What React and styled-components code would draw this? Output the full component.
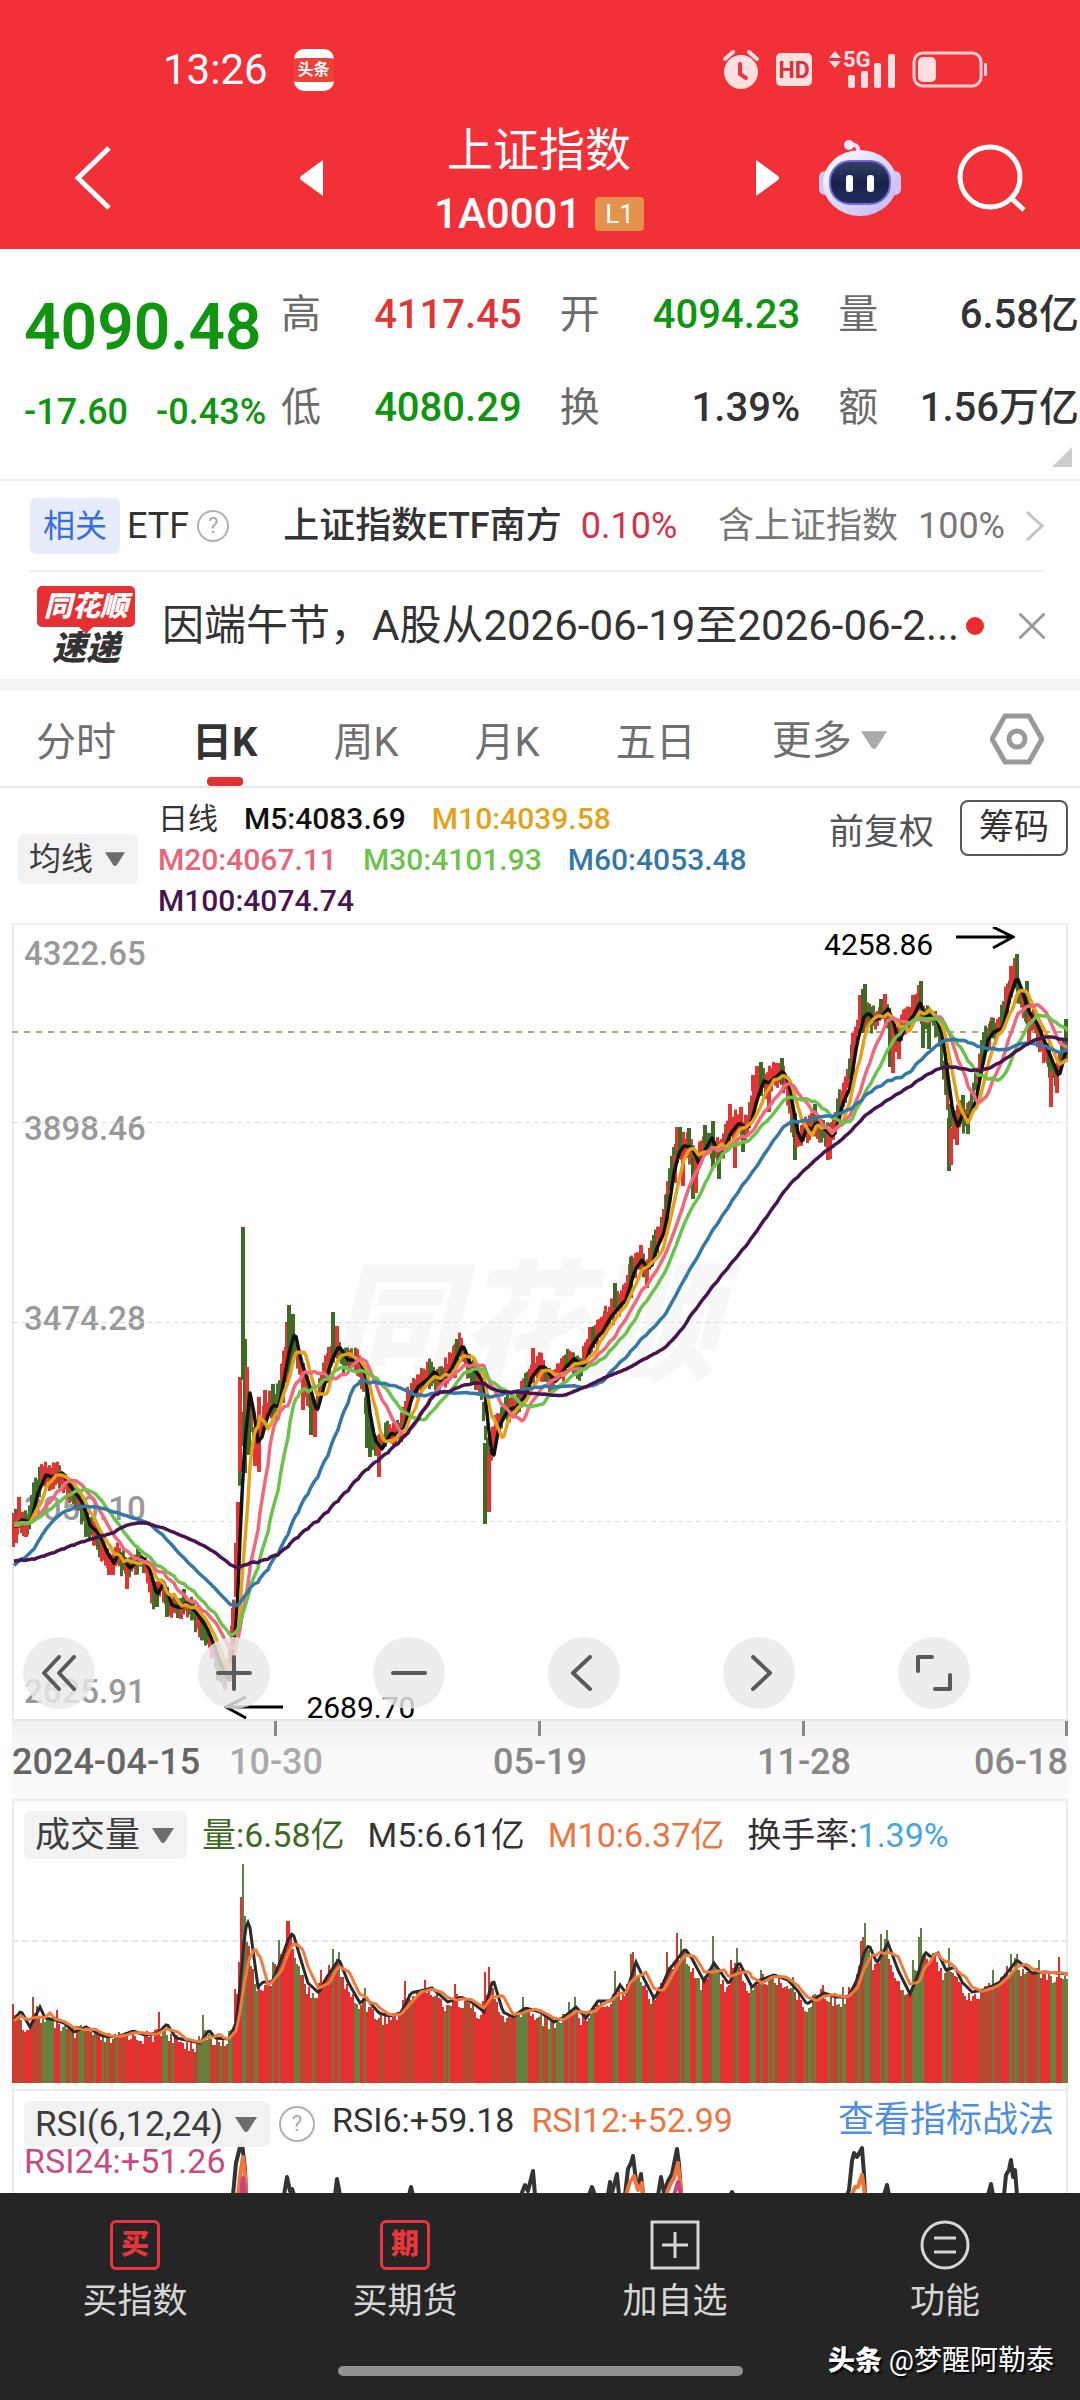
import React, { useState } from "react";
import styled, { createGlobalStyle } from "styled-components";

const GlobalStyle = createGlobalStyle`
  * {
    box-sizing: border-box;
  }
  body {
    margin: 0;
    background: #fff;
    color: #333;
    font-family: Roboto, "Noto Sans CJK SC", sans-serif;
  }
  button, select, a {
    font-family: inherit;
    color: inherit;
  }
`;

/* ---------- series ---------- */

const STEP = 2; // one trading day on the x axis

// 5 day average, [x, y]; negative x is the history before the first visible day
const priceM5 = [
  [-210, 600], [-160, 620], [-130, 650], [-100, 690], [-88, 760], [-75, 680], [-60, 615], [-40, 600], [-20, 598],
  [3, 604], [10, 597], [19, 599], [26, 570], [34, 552], [40, 554], [50, 550], [59, 564], [71, 580], [78, 602],
  [88, 612], [95, 629], [102, 640], [107, 630], [118, 645], [131, 634], [138, 647], [145, 672], [152, 660],
  [160, 682], [169, 685], [174, 680], [184, 689], [195, 705], [203, 724], [212, 750], [218, 757], [223, 717],
  [226, 667], [229, 590], [233, 517], [238, 470], [242, 490], [246, 519], [250, 514], [255, 495], [261, 482],
  [267, 484], [277, 430], [283, 409], [289, 437], [298, 464], [305, 489], [313, 460], [320, 437], [327, 423],
  [336, 437], [348, 437], [354, 454], [358, 490], [363, 517], [370, 526], [379, 510], [384, 512], [393, 504],
  [399, 477], [406, 464], [415, 457], [423, 448], [429, 459], [439, 447], [451, 422], [458, 440], [465, 450],
  [472, 460], [477, 510], [481, 537], [487, 504], [496, 487], [505, 484], [515, 470], [520, 454], [528, 444],
  [533, 444], [543, 459], [554, 444], [562, 436], [573, 444], [578, 426], [587, 412], [590, 410], [599, 394],
  [609, 382], [614, 377], [623, 347], [630, 337], [635, 345], [640, 342], [645, 325], [652, 310], [657, 284],
  [662, 250], [667, 230], [672, 223], [679, 224], [683, 230], [687, 242], [693, 227], [700, 215], [705, 227],
  [712, 227], [719, 210], [727, 200], [735, 205], [740, 197], [745, 177], [752, 158], [757, 160], [764, 154],
  [771, 148], [777, 160], [781, 184], [786, 210], [790, 218], [795, 204], [800, 207], [805, 199], [812, 205],
  [821, 214], [826, 200], [831, 180], [838, 165], [845, 120], [852, 94], [857, 90], [862, 97], [869, 94],
  [876, 86], [881, 97], [887, 120], [893, 104], [902, 92], [908, 80], [913, 92], [924, 94], [931, 114],
  [936, 154], [941, 190], [946, 203], [951, 190], [957, 197], [964, 177], [969, 150], [976, 117], [982, 109],
  [991, 105], [998, 74], [1005, 54], [1010, 67], [1017, 89], [1025, 100], [1032, 117], [1038, 132], [1047, 154],
  [1055, 124],
];

// wide days: [x, high, low, r(ise) | g(reen, fall)]
const priceSpikes = [
  [1, 590, 624, "r"], [4, 600, 620, "r"], [7, 574, 600, "r"], [14, 596, 614, "r"], [45, 540, 560, "r"],
  [97, 630, 652, "r"], [101, 632, 652, "r"], [115, 640, 666, "r"], [145, 664, 684, "g"], [155, 664, 694, "g"],
  [169, 682, 696, "r"], [172, 666, 680, "g"], [213, 735, 766, "r"], [221, 685, 714, "r"], [224, 620, 674, "r"],
  [226, 579, 650, "r"], [228, 454, 549, "r"], [231, 304, 457, "g"], [233, 416, 550, "g"], [235, 444, 500, "r"],
  [237, 470, 532, "g"], [243, 507, 543, "r"], [247, 474, 549, "r"], [253, 467, 500, "r"], [261, 461, 480, "g"],
  [271, 440, 480, "r"], [275, 399, 460, "r"], [277, 382, 450, "g"], [281, 391, 440, "g"], [291, 440, 487, "r"],
  [299, 470, 512, "g"], [303, 480, 514, "r"], [317, 424, 460, "r"], [321, 389, 440, "g"], [325, 403, 430, "r"],
  [355, 460, 525, "g"], [358, 490, 534, "g"], [367, 520, 554, "r"], [443, 422, 455, "r"], [445, 416, 440, "g"],
  [449, 415, 430, "r"], [473, 520, 601, "g"], [477, 533, 589, "r"], [481, 504, 534, "r"], [521, 425, 450, "r"],
  [578, 404, 430, "r"], [581, 404, 425, "g"], [593, 388, 405, "r"], [603, 360, 385, "g"], [619, 334, 375, "g"],
  [629, 322, 345, "r"], [635, 345, 365, "r"], [655, 271, 310, "g"], [663, 232, 260, "r"], [665, 204, 227, "r"],
  [668, 204, 230, "g"], [671, 225, 263, "r"], [677, 205, 225, "g"], [681, 235, 276, "g"], [684, 232, 270, "r"],
  [693, 202, 220, "g"], [701, 198, 244, "g"], [707, 225, 256, "g"], [718, 181, 210, "r"], [723, 200, 245, "r"],
  [729, 184, 205, "r"], [731, 205, 229, "g"], [741, 152, 168, "r"], [745, 143, 168, "r"], [749, 139, 168, "g"],
  [757, 150, 189, "r"], [764, 140, 160, "r"], [770, 135, 160, "g"], [783, 190, 237, "g"], [785, 200, 224, "r"],
  [803, 181, 205, "g"], [816, 205, 237, "r"], [818, 205, 236, "r"], [833, 159, 180, "r"], [841, 110, 150, "r"],
  [848, 72, 100, "r"], [851, 66, 110, "g"], [853, 61, 95, "g"], [869, 76, 95, "g"], [873, 71, 95, "r"],
  [878, 100, 144, "g"], [881, 100, 150, "r"], [887, 100, 136, "r"], [901, 72, 95, "r"], [907, 62, 90, "r"],
  [909, 58, 90, "g"], [911, 90, 125, "g"], [917, 95, 126, "g"], [935, 140, 172, "g"], [937, 195, 248, "g"],
  [939, 205, 242, "r"], [945, 200, 222, "r"], [951, 172, 195, "g"], [956, 195, 211, "g"], [979, 98, 115, "g"],
  [995, 65, 95, "r"], [999, 43, 70, "r"], [1003, 35, 60, "r"], [1005, 31, 65, "g"], [1015, 58, 100, "g"],
  [1017, 90, 119, "r"], [1037, 120, 144, "g"], [1039, 148, 184, "r"], [1045, 150, 170, "r"], [1054, 96, 125, "g"],
];

const volumeM5 = [
  [-20, 224], [2, 221], [9, 212], [18, 228], [28, 208], [33, 219], [43, 221], [52, 224], [62, 233], [74, 228],
  [91, 237], [105, 238], [121, 232], [133, 236], [146, 234], [155, 225], [164, 239], [174, 241], [188, 244],
  [197, 231], [203, 239], [217, 240], [224, 224], [229, 178], [233, 131], [237, 121], [240, 144], [246, 188],
  [251, 183], [260, 183], [269, 161], [276, 141], [281, 134], [288, 158], [296, 184], [307, 194], [313, 181],
  [327, 160], [336, 183], [348, 204], [354, 199], [367, 214], [377, 217], [389, 214], [399, 194], [420, 189],
  [436, 203], [449, 198], [461, 204], [472, 213], [481, 180], [491, 213], [501, 218], [513, 209], [528, 213],
  [542, 223], [552, 218], [564, 208], [574, 219], [586, 202], [599, 202], [608, 186], [614, 194], [624, 163],
  [631, 178], [642, 199], [648, 191], [657, 171], [673, 150], [679, 158], [692, 182], [702, 164], [717, 185],
  [727, 163], [740, 188], [748, 181], [762, 176], [776, 181], [785, 191], [795, 205], [812, 194], [824, 198],
  [836, 198], [845, 181], [852, 154], [857, 146], [865, 164], [876, 144], [886, 171], [898, 195], [905, 178],
  [913, 153], [919, 158], [926, 154], [934, 171], [943, 168], [950, 183], [960, 193], [972, 191], [988, 183],
  [1005, 161], [1020, 174], [1034, 173], [1055, 175],
];

const volumeSpikes = [
  [1, 205, "r"], [21, 198, "r"], [45, 211, "r"], [147, 213, "r"], [191, 216, "r"], [223, 190, "r"], [229, 98, "r"],
  [231, 65, "g"], [233, 117, "g"], [235, 143, "r"], [261, 163, "g"], [267, 141, "g"], [275, 122, "r"],
  [277, 122, "r"], [309, 171, "r"], [317, 166, "r"], [321, 150, "g"], [327, 153, "g"], [353, 189, "g"],
  [393, 182, "r"], [413, 181, "r"], [443, 185, "r"], [473, 173, "r"], [477, 168, "r"], [511, 198, "g"],
  [557, 203, "g"], [563, 198, "g"], [603, 172, "g"], [619, 155, "r"], [621, 153, "r"], [655, 153, "r"],
  [665, 134, "r"], [669, 140, "g"], [701, 137, "g"], [719, 161, "r"], [725, 149, "g"], [749, 171, "g"],
  [781, 178, "g"], [811, 186, "r"], [831, 188, "r"], [849, 142, "r"], [851, 138, "r"], [853, 124, "g"],
  [869, 135, "g"], [875, 131, "r"], [901, 161, "r"], [907, 138, "r"], [909, 129, "g"], [937, 149, "g"],
  [981, 171, "g"], [999, 155, "r"], [1005, 155, "g"], [1027, 161, "g"], [1047, 158, "r"],
];

const at = (series, x) => {
  const i = series.findIndex((p) => p[0] >= x);
  if (i < 0) return series[series.length - 1][1];
  if (i === 0) return series[0][1];
  const [x0, y0] = series[i - 1];
  const [x1, y1] = series[i];
  return y0 + ((y1 - y0) * (x - x0)) / (x1 - x0);
};

// an n day average is the mean of n / 5 five day averages, five days apart
const average = (series, days) => {
  const parts = days / 5;
  const points = [];
  for (let x = 2; x <= 1056; x += STEP) {
    let sum = 0;
    for (let k = 0; k < parts; k++) sum += at(series, x - k * 5 * STEP);
    points.push(`${x},${(sum / parts).toFixed(1)}`);
  }
  return points.join(" ");
};

const noise = (n) => {
  const v = Math.sin(n * 12.9898) * 43758.5453;
  return v - Math.floor(v);
};

const days = Array.from({ length: 528 }, (_, i) => i);

const candles = days.map((i) => {
  const x = i * STEP + 1;
  const mid = at(priceM5, x + 4);
  const rising = mid < at(priceM5, x);
  const top = mid - 5 - noise(i) * 10;
  const bottom = mid + 5 + noise(i + 700) * 11;
  const n = noise(Math.floor(i / 2) + 90) + (rising ? 0 : 0.2);
  let fill = "#e23434";
  if (n > 0.5) fill = "#b4492f";
  if (n > 0.75) fill = "#44702a";
  return { x, top, height: bottom - top, fill };
});

const volumeBars = days.map((i) => {
  const x = i * STEP + 1;
  const spike = volumeSpikes.find((s) => s[0] === x);
  const top = spike ? spike[1] : at(volumeM5, x + 3) - 4 + noise(i + 31) * 14;
  // the falling stretches of the first year carry more of the mixed tone
  const n = noise(Math.floor(i / 3) + 5) + noise(i) * 0.3;
  const early = x < 560 && (x < 215 || x > 330);
  let fill = "#e63030";
  if (n > (early ? 0.55 : 0.7)) fill = "#b8482f";
  if (n > (early ? 0.9 : 1)) fill = "#68803c";
  return { x, top, fill: spike && spike[2] === "g" ? "#5f8044" : fill };
});

const maLines = [
  { days: 5, color: "#111111" },
  { days: 10, color: "#e2a21c" },
  { days: 20, color: "#f0687c" },
  { days: 30, color: "#6cc24a" },
  { days: 60, color: "#3478a8" },
  { days: 100, color: "#481450" },
];

const rsiLines = [
  {
    color: "#333333",
    paths: [
      "221,106 224,74 228,58 230,54 233,80 234,106", "272,106 275,88 278,102 280,100 282,106",
      "323,106 325,90 328,106", "397,106 399,98 401,106", "509,106 513,96 516,102 521,82 523,106",
      "577,106 580,98 583,106", "596,106 598,93 600,104 605,85 607,106", "613,106 616,80 619,74 621,67 624,92 626,100 629,85 631,106",
      "646,106 649,88 652,104 656,92 660,85 665,60 667,75 669,106", "718,106 720,103 722,106",
      "835,106 837,101 840,72 842,64 845,68 850,59 852,85 853,106", "872,106 875,96 877,106",
      "976,106 979,95 981,106", "992,106 994,86 997,81 999,71 1001,88 1003,81 1005,106",
    ],
  },
  {
    color: "#f0743c",
    paths: [
      "226,106 229,80 231,68 233,84 234,106", "614,106 618,93 622,87 626,101 630,94 631,106",
      "654,106 658,96 662,89 666,74 668,92 669,106", "840,106 843,98 846,98 850,86 853,106",
    ],
  },
  { color: "#d03f82", paths: ["229,106 231,89 233,106", "662,106 666,93 669,106"] },
];

/* ---------- header ---------- */

const Header = styled.header`
  height: 249px;
  background: #f23037;
  color: #fff;
`;
const StatusBar = styled.div`
  display: flex;
  align-items: center;
  height: 106px;
  padding: 34px 92px 0 163px;
`;
const Clock = styled.span`
  font-size: 42px;
  line-height: 48px;
`;
const AppBadge = styled.span`
  width: 40px;
  height: 42px;
  margin-left: 26px;
  border-radius: 10px;
  border: solid #fff;
  border-width: 9px 0;
  background: #ee3f38;
  font-size: 16px;
  line-height: 24px;
  font-weight: 700;
  text-align: center;
`;
const StatusIcons = styled.div`
  display: flex;
  align-items: center;
  gap: 17px;
  margin-left: auto;
`;
const TitleBar = styled.div`
  display: grid;
  grid-template-columns: 1fr 480px 1fr;
  align-items: center;
  height: 143px;
`;
const TitleSide = styled.div`
  display: flex;
  align-items: center;
  justify-content: ${(p) => (p.$end ? "flex-end" : "flex-start")};
  gap: 55px;
  padding: 0 54px 0 74px;
  ${(p) => p.$end && "padding-left: 0;"}
`;
const TitleCenter = styled.div`
  display: flex;
  align-items: center;
  justify-content: space-between;
`;
const IconButton = styled.button`
  display: flex;
  padding: 0;
  border: none;
  background: none;
  cursor: pointer;
`;
const TitleText = styled.div`
  padding-top: 8px;
  text-align: center;
`;
const Title = styled.h1`
  margin: 0;
  font-size: 46px;
  line-height: 64px;
  font-weight: 400;
`;
const Code = styled.div`
  display: flex;
  align-items: center;
  justify-content: center;
  gap: 14px;
  font-size: 42px;
  line-height: 64px;
  font-weight: 500;
`;
const Level = styled.span`
  padding: 0 10px;
  border-radius: 4px;
  background: #e3934b;
  font-size: 26px;
  line-height: 34px;
  font-weight: 400;
`;

/* ---------- quote ---------- */

const colors = { up: "#e03535", down: "#0f950f", flat: "#333333" };

const Quote = styled.section`
  position: relative;
  display: flex;
  height: 232px;
  padding: 19px 1px 0 24px;
  border-bottom: 2px solid #eeeeee;
`;
const Last = styled.div`
  flex: 0 0 257px;
  padding-top: 18px;
  color: ${colors.down};
  white-space: nowrap;
`;
const LastPrice = styled.div`
  font-size: 64px;
  line-height: 84px;
  font-weight: 600;
`;
const LastChange = styled.div`
  display: flex;
  gap: 28px;
  font-size: 36px;
  line-height: 84px;
  font-weight: 500;
`;
const Stats = styled.dl`
  flex: 1;
  display: grid;
  grid-template-columns: repeat(3, 1fr);
  column-gap: 38px;
  align-content: start;
  margin: 0;
`;
const Stat = styled.div`
  display: flex;
  justify-content: space-between;
  height: 93px;
  font-size: 40px;
  line-height: 93px;
  white-space: nowrap;
  dt {
    color: #6b6b6b;
  }
  dd {
    margin: 0;
    color: ${(p) => colors[p.$tone]};
    font-weight: 500;
  }
`;
const Corner = styled.svg`
  position: absolute;
  right: 8px;
  bottom: 12px;
`;

/* ---------- etf + news ---------- */

const EtfRow = styled.section`
  display: flex;
  align-items: center;
  height: 91px;
  margin: 0 36px 0 30px;
  border-bottom: 2px solid #eeeeee;
  font-size: 36px;
  line-height: 56px;
  white-space: nowrap;
`;
const Tag = styled.span`
  padding: 0 13px;
  margin-right: 7px;
  border-radius: 6px;
  background: #e6ecfb;
  color: #3a6de0;
  font-size: 32px;
`;
const EtfHelp = styled.div`
  display: flex;
  margin: 0 54px 0 8px;
`;
const EtfFund = styled.div`
  display: flex;
  align-items: baseline;
  gap: 19px;
`;
const EtfName = styled.a`
  font-weight: 500;
  text-decoration: none;
`;
const EtfChange = styled.span`
  color: #d9304a;
`;
const EtfShare = styled.div`
  display: flex;
  align-items: baseline;
  gap: 20px;
  margin: 0 20px 0 auto;
  color: #777;
`;
const Help = styled.button`
  width: ${(p) => p.$size}px;
  height: ${(p) => p.$size}px;
  padding: 0;
  border: 2px solid #b0b0b0;
  border-radius: 50%;
  background: none;
  color: #aaa;
  font-size: 22px;
  line-height: 24px;
`;
const NewsRow = styled.section`
  display: flex;
  align-items: center;
  height: 119px;
  padding: 0 35px 0 37px;
  border-bottom: 12px solid #f4f4f4;
`;
const Express = styled.div`
  flex: none;
  width: 98px;
  margin-right: 27px;
  font-size: 34px;
  line-height: 36px;
  font-weight: 900;
  font-style: italic;
  text-align: center;
`;
const ExpressTop = styled.div`
  position: relative;
  margin-bottom: 3px;
  border-radius: 5px;
  background: #e53134;
  color: #fff;
  font-size: 28px;
  line-height: 41px;
  &::after {
    content: "";
    position: absolute;
    left: 42px;
    top: 41px;
    border: 7px solid transparent;
    border-top-color: #e53134;
  }
`;
const Headline = styled.a`
  flex: 1;
  overflow: hidden;
  font-size: 42px;
  line-height: 60px;
  text-decoration: none;
  white-space: nowrap;
`;
const UnreadDot = styled.span`
  width: 18px;
  height: 18px;
  margin: 0 35px 0 4px;
  border-radius: 50%;
  background: #e92c2c;
`;

/* ---------- tabs + legend ---------- */

const Tabs = styled.nav`
  display: flex;
  align-items: stretch;
  gap: 76px;
  height: 97px;
  padding: 0 36px;
  border-bottom: 2px solid #e8e8e8;
`;
const Tab = styled.button`
  position: relative;
  padding: 0;
  border: none;
  background: none;
  color: ${(p) => (p.$active ? "#333" : "#707070")};
  font-size: 40px;
  font-weight: ${(p) => (p.$active ? 700 : 400)};
  white-space: nowrap;
  &::after {
    content: "";
    position: absolute;
    left: calc(50% - 18px);
    bottom: 0;
    width: 36px;
    height: 9px;
    border-radius: 4px;
    background: ${(p) => (p.$active ? "#e03236" : "none")};
  }
`;
const MoreTab = styled.label`
  display: flex;
  align-items: center;
  gap: 9px;
  padding-top: 3px;
  color: #707070;
`;
const Settings = styled(IconButton)`
  align-items: center;
  margin-left: auto;
`;
const Picker = styled.label`
  display: inline-flex;
  align-items: center;
  gap: 11px;
  height: ${(p) => p.$height || 48}px;
  padding: 0 13px 0 11px;
  border-radius: 6px;
  background: #f2f2f2;
  opacity: 0.95;
`;
const Select = styled.select`
  appearance: none;
  padding: 0;
  border: none;
  outline: none;
  background: none;
  font-size: ${(p) => p.$size || 34}px;
`;
const Legend = styled.section`
  display: flex;
  align-items: flex-start;
  height: 135px;
  padding: 10px 12px 0 18px;
`;
const LegendPicker = styled.div`
  flex: none;
  width: 140px;
  padding-top: 36px;
`;
const LegendItems = styled.div`
  display: flex;
  flex-wrap: wrap;
  flex: 0 1 640px;
  column-gap: 26px;
  font-size: 30px;
  line-height: 41px;
  font-weight: 500;
`;
const LegendTitle = styled.span`
  font-weight: 400;
`;
const Colored = styled.span`
  color: ${(p) => p.$color};
`;
const Adjust = styled.button`
  margin-left: auto;
  padding: 0;
  border: none;
  background: none;
  color: #555;
  font-size: 35px;
  line-height: 70px;
`;
const Chips = styled.button`
  width: 108px;
  height: 56px;
  margin: 2px 0 0 26px;
  padding: 0;
  border: 2px solid #555;
  border-radius: 8px;
  background: #fff;
  font-size: 35px;
  line-height: 50px;
`;

/* ---------- charts ---------- */

const Panel = styled.section`
  position: relative;
  height: ${(p) => p.$height}px;
  margin: 0 12px;
  border: solid #ececec;
  border-width: 2px 2px 0;
`;
const Plot = styled.svg`
  position: absolute;
  left: -2px;
  top: -2px;
  width: calc(100% + 4px);
  height: ${(p) => p.$height}px;
`;
const Watermark = styled.div`
  position: absolute;
  left: 314px;
  top: 326px;
  color: #f7f7f7;
  font-size: 130px;
  line-height: 150px;
  font-weight: 900;
  font-style: italic;
`;
const AxisPrice = styled.span`
  position: absolute;
  left: 10px;
  top: ${(p) => p.$top}px;
  color: #999;
  font-size: 33px;
  line-height: 40px;
  font-weight: 500;
`;
const Marker = styled.div`
  position: absolute;
  left: ${(p) => p.$left}%;
  top: ${(p) => p.$top}px;
  display: flex;
  align-items: ${(p) => p.$align};
  gap: 22px;
  color: #000;
  font-size: 30px;
  line-height: 36px;
`;
const Controls = styled.div`
  position: absolute;
  left: 9px;
  right: 96px;
  bottom: 10px;
  display: flex;
  justify-content: space-between;
`;
const RoundButton = styled.button`
  display: flex;
  align-items: center;
  justify-content: center;
  width: 72px;
  height: 72px;
  padding: 0;
  border: none;
  border-radius: 50%;
  background: rgba(233, 233, 233, 0.82);
`;
const TimeAxis = styled.div`
  display: grid;
  grid-template-columns: minmax(0, 1fr) repeat(3, minmax(0, 2fr)) minmax(0, 1fr);
  height: 80px;
  margin: 0 12px;
  padding-top: 22px;
  border-top: 2px solid #e6e6e6;
  background: linear-gradient(#f1f1f1, #fafafa 50%);
  color: #888;
  font-size: 36px;
  line-height: 38px;
  font-weight: 500;
  text-align: center;
  white-space: nowrap;
`;
const Tick = styled.span`
  position: relative;
  justify-self: ${(p) => (p.$last ? "end" : "center")};
  color: ${(p) => (p.$fade ? "#aaa" : "inherit")};
  &::before {
    content: "";
    position: absolute;
    left: ${(p) => (p.$last ? "calc(100% - 3px)" : "calc(50% - 2px)")};
    top: -22px;
    width: 3px;
    height: 15px;
    background: #888;
  }
`;
const FirstDay = styled.span`
  color: #666;
  text-align: left;
`;
const PanelHead = styled.div`
  position: relative;
  display: flex;
  align-items: center;
  gap: 23px;
  padding: 10px 12px 0 10px;
  font-size: 34px;
  line-height: 48px;
  white-space: nowrap;
  ${Picker} {
    margin-right: -8px;
  }
`;
const RsiHead = styled(PanelHead)`
  align-items: flex-start;
  gap: 17px;
  line-height: 38px;
  ${Help} {
    margin-top: 5px;
  }
`;
const RsiClip = styled.div`
  height: 104px;
  overflow: hidden;
`;
const RsiSecond = styled.div`
  position: relative;
  padding-left: 10px;
  color: #c94a83;
  font-size: 34px;
  line-height: 28px;
`;
const TextLink = styled.a`
  margin-left: auto;
  color: #4f8fe0;
  font-size: 36px;
  text-decoration: none;
`;

/* ---------- footer ---------- */

const Footer = styled.footer`
  position: relative;
  height: 207px;
  background: #252525;
`;
const Actions = styled.nav`
  display: grid;
  grid-template-columns: repeat(4, 1fr);
  padding-top: 27px;
`;
const Action = styled.a`
  display: flex;
  flex-direction: column;
  align-items: center;
  gap: 7px;
  color: #d6d6d6;
  font-size: 35px;
  line-height: 50px;
  text-decoration: none;
`;
const ActionBox = styled.span`
  width: 50px;
  height: 50px;
  border: 3px solid #e8363c;
  border-radius: 6px;
  color: #e8363c;
  font-size: 28px;
  line-height: 43px;
  font-weight: 900;
  text-align: center;
`;
const HomeBar = styled.div`
  width: 405px;
  height: 10px;
  margin: 39px auto 0;
  border-radius: 5px;
  background: #929292;
`;
const Author = styled.div`
  position: absolute;
  right: 26px;
  bottom: 21px;
  color: #fff;
  font-size: 28px;
  line-height: 36px;
  text-shadow: 2px 2px 2px #000;
  b {
    font-weight: 900;
    font-size: 27px;
  }
`;

/* ---------- icons ---------- */

const Caret = ({ width = 22, color = "#666" }) => (
  <svg width={width} height={Math.round(width * 0.7)} viewBox="0 0 22 15" aria-hidden="true">
    <path d="M0 0h22L13 14q-2 2-4 0Z" fill={color} />
  </svg>
);

const Stroke = ({ d, size = 36, width = 4, color = "#5a5a5a" }) => (
  <svg width={size} height={size} viewBox="0 0 36 36" fill="none" stroke={color} strokeWidth={width} strokeLinecap="round" strokeLinejoin="round" aria-hidden="true">
    <path d={d} />
  </svg>
);

const PhoneStatus = () => (
  <StatusIcons>
    <svg width="36" height="40" viewBox="0 0 36 40" fill="#ffdfe0">
      <circle cx="18" cy="22" r="17" />
      <path d="M2 9l8-7M34 9l-8-7" stroke="#ffdfe0" strokeWidth="4" strokeLinecap="round" />
      <path d="M17 14v10l6 4" fill="none" stroke="#e8363b" strokeWidth="4" strokeLinecap="round" />
    </svg>
    <svg width="36" height="34" viewBox="0 0 36 34">
      <rect width="36" height="33" rx="5" fill="#ffdfe0" />
      <text x="18" y="25" textAnchor="middle" fontSize="23" fontWeight="700" fill="#d93238">HD</text>
    </svg>
    <svg width="66" height="52" viewBox="0 -6 66 52" fill="#ffdfe0">
      <path d="M0 8l6-7 6 7zM0 11h12l-6 7z" />
      <text x="14" y="17" fontSize="22" fontWeight="700">5G</text>
      <rect x="19" y="25" width="7" height="13" rx="2" />
      <rect x="32" y="21" width="7" height="17" rx="2" />
      <rect x="45" y="13" width="7" height="25" rx="2" />
      <rect x="59" y="4" width="7" height="34" rx="2" />
    </svg>
    <svg width="76" height="38" viewBox="0 0 76 38">
      <rect x="2" y="2" width="67" height="33" rx="9" fill="none" stroke="#ffcfd1" strokeWidth="3" />
      <rect x="6" y="6" width="18" height="25" rx="5" fill="#ffdfe0" />
      <rect x="72" y="12" width="3" height="13" rx="1" fill="#ffcfd1" />
    </svg>
  </StatusIcons>
);

const Robot = () => (
  <svg width="82" height="78" viewBox="0 0 82 78">
    <defs>
      <linearGradient id="shell" x1="0" y1="0" x2="1" y2="1">
        <stop offset="0" stopColor="#ffffff" />
        <stop offset="1" stopColor="#bfb4f0" />
      </linearGradient>
      <linearGradient id="visor" x1="0" y1="0" x2="0" y2="1">
        <stop offset="0" stopColor="#34406a" />
        <stop offset="0.5" stopColor="#18234a" />
        <stop offset="1" stopColor="#222c5c" />
      </linearGradient>
    </defs>
    <path d="M39 14q2-9-9-9" fill="none" stroke="#eadff8" strokeWidth="4" />
    <circle cx="30" cy="6" r="5" fill="#f6ecfb" />
    <rect x="0" y="32" width="12" height="24" rx="6" fill="#cfc4f2" />
    <rect x="70" y="32" width="12" height="24" rx="6" fill="#cfc4f2" />
    <ellipse cx="41" cy="44" rx="37" ry="33" fill="url(#shell)" />
    <rect x="11" y="22" width="60" height="43" rx="20" fill="url(#visor)" stroke="#7668dc" strokeWidth="2" />
    <rect x="27" y="36" width="7" height="17" rx="3" fill="#fff" />
    <rect x="48" y="36" width="7" height="17" rx="3" fill="#fff" />
  </svg>
);

const tabs = ["分时", "日K", "周K", "月K", "五日"];

const PriceChart = () => (
  <Panel $height={796}>
    <Watermark>同花顺</Watermark>
    <AxisPrice $top={9}>4322.65</AxisPrice>
    <AxisPrice $top={184}>3898.46</AxisPrice>
    <AxisPrice $top={374}>3474.28</AxisPrice>
    <AxisPrice $top={564}>3050.10</AxisPrice>
    <AxisPrice $top={747}>2625.91</AxisPrice>
    <Plot $height={796} viewBox="0 0 1056 796" preserveAspectRatio="none">
      {[199, 399, 598].map((y) => (
        <path key={y} d={`M0 ${y}.5H1056`} stroke="#dddddd" strokeDasharray="5 4" />
      ))}
      <path d="M0 109H1056" stroke="#b3a671" strokeWidth="2" strokeDasharray="6 6" />
      {candles.map((c) => (
        <rect key={c.x} x={c.x - 1} y={c.top} width="3" height={c.height} fill={c.fill} />
      ))}
      {priceSpikes.map(([x, top, bottom, tone]) => (
        <rect key={`s${x}`} x={x - 2} y={top} width="4" height={bottom - top} fill={tone === "r" ? "#e23434" : "#3d6b24"} />
      ))}
      {maLines.map((l) => (
        <polyline key={l.days} points={average(priceM5, l.days)} fill="none" stroke={l.color} strokeWidth="3.5" strokeLinejoin="round" />
      ))}
    </Plot>
    <Marker $left={77} $top={2} $align="flex-start">
      4258.86
      <svg width="60" height="26" viewBox="0 0 60 26" fill="none" stroke="#000" strokeWidth="3">
        <path d="M1 10H57M38 0l20 10-20 11" />
      </svg>
    </Marker>
    <Marker $left={20} $top={765} $align="center">
      <svg width="60" height="26" viewBox="0 0 60 26" fill="none" stroke="#000" strokeWidth="3">
        <path d="M59 12H3M22 2L2 12l20 11" />
      </svg>
      2689.70
    </Marker>
    <Controls>
      <RoundButton aria-label="最早">
        <Stroke d="M18 2L3 18l15 16M33 2L18 18l15 16" />
      </RoundButton>
      <RoundButton aria-label="放大">
        <Stroke d="M2 18h32M18 2v32" />
      </RoundButton>
      <RoundButton aria-label="缩小">
        <Stroke d="M2 18h32" />
      </RoundButton>
      <RoundButton aria-label="向前">
        <Stroke d="M24 2L7 18l17 16" />
      </RoundButton>
      <RoundButton aria-label="向后">
        <Stroke d="M12 2l17 16-17 16" />
      </RoundButton>
      <RoundButton aria-label="全屏">
        <Stroke d="M2 16V2h14M34 20v14H19" />
      </RoundButton>
    </Controls>
  </Panel>
);

const VolumeChart = () => (
  <Panel $height={290}>
    <Plot $height={290} viewBox="0 0 1056 290" preserveAspectRatio="none">
      <path d="M0 142H1056" stroke="#e6e6e6" strokeWidth="2" strokeDasharray="6 4" />
      {volumeBars.map((b) => (
        <rect key={b.x} x={b.x - 1} y={b.top} width="2" height={284 - b.top} fill={b.fill} shapeRendering="crispEdges" />
      ))}
      <polyline points={average(volumeM5, 5)} fill="none" stroke="#2b2b2b" strokeWidth="3" />
      <polyline points={average(volumeM5, 10)} fill="none" stroke="#f27a3c" strokeWidth="3" />
    </Plot>
    <PanelHead>
      <Picker>
        <Select aria-label="副图指标" $size={35}>
          <option>成交量</option>
        </Select>
        <Caret />
      </Picker>
      <Colored $color="#3c6b1f">量:6.58亿</Colored>
      <Colored $color="#333">M5:6.61亿</Colored>
      <Colored $color="#ec7440">M10:6.37亿</Colored>
      <span>
        换手率:<Colored $color="#45a6dc">1.39%</Colored>
      </span>
    </PanelHead>
  </Panel>
);

const RsiChart = () => (
  <RsiClip>
    <Panel $height={110}>
      <Plot $height={110} viewBox="0 0 1056 110" preserveAspectRatio="none">
        {rsiLines.map((l) =>
          l.paths.map((points) => (
            <polyline key={points} points={points} fill="none" stroke={l.color} strokeWidth="4" strokeLinejoin="round" />
          ))
        )}
      </Plot>
      <RsiHead>
        <Picker $height={46}>
          <Select aria-label="RSI 参数" $size={35}>
            <option>RSI(6,12,24)</option>
          </Select>
          <Caret />
        </Picker>
        <Help $size={36}>?</Help>
        <span>RSI6:+59.18</span>
        <Colored $color="#ec7440">RSI12:+52.99</Colored>
        <TextLink href="#strategy">查看指标战法</TextLink>
      </RsiHead>
      <RsiSecond>RSI24:+51.26</RsiSecond>
    </Panel>
  </RsiClip>
);

const App = () => {
  const [tab, setTab] = useState("日K");
  return (
    <main>
      <GlobalStyle />
      <Header>
        <StatusBar>
          <Clock>13:26</Clock>
          <AppBadge>头条</AppBadge>
          <PhoneStatus />
        </StatusBar>
        <TitleBar>
          <TitleSide>
            <IconButton aria-label="返回">
              <svg width="38" height="64" viewBox="0 0 38 64" fill="none" stroke="#fff" strokeWidth="5">
                <path d="M35 2L4 32l31 30" />
              </svg>
            </IconButton>
          </TitleSide>
          <TitleCenter>
            <IconButton aria-label="上一个">
              <svg width="24" height="36" viewBox="0 0 24 36" fill="#fff">
                <path d="M23 0v36L1 20q-2-2 0-4Z" />
              </svg>
            </IconButton>
            <TitleText>
              <Title>上证指数</Title>
              <Code>
                1A0001 <Level>L1</Level>
              </Code>
            </TitleText>
            <IconButton aria-label="下一个">
              <svg width="26" height="36" viewBox="0 0 24 36" fill="#fff">
                <path d="M1 0v36l22-16q2-2 0-4Z" />
              </svg>
            </IconButton>
          </TitleCenter>
          <TitleSide $end>
            <IconButton aria-label="助手">
              <Robot />
            </IconButton>
            <IconButton aria-label="搜索">
              <svg width="70" height="68" viewBox="0 0 70 68" fill="none" stroke="#fff" strokeWidth="5">
                <circle cx="34" cy="33" r="30" />
                <path d="M55 54l13 12" strokeWidth="5" />
              </svg>
            </IconButton>
          </TitleSide>
        </TitleBar>
      </Header>

      <Quote>
        <Last>
          <LastPrice>4090.48</LastPrice>
          <LastChange>
            <span>-17.60</span>
            <span>-0.43%</span>
          </LastChange>
        </Last>
        <Stats>
          <Stat $tone="up"><dt>高</dt><dd>4117.45</dd></Stat>
          <Stat $tone="down"><dt>开</dt><dd>4094.23</dd></Stat>
          <Stat $tone="flat"><dt>量</dt><dd>6.58亿</dd></Stat>
          <Stat $tone="down"><dt>低</dt><dd>4080.29</dd></Stat>
          <Stat $tone="flat"><dt>换</dt><dd>1.39%</dd></Stat>
          <Stat $tone="flat"><dt>额</dt><dd>1.56万亿</dd></Stat>
        </Stats>
        <Corner width="20" height="20" viewBox="0 0 20 20">
          <path d="M20 0v20H0z" fill="#cccccc" />
        </Corner>
      </Quote>

      <EtfRow>
        <Tag>相关</Tag>
        <span>ETF</span>
        <EtfHelp>
          <Help $size={32}>?</Help>
        </EtfHelp>
        <EtfFund>
          <EtfName href="#etf">上证指数ETF南方</EtfName>
          <EtfChange>0.10%</EtfChange>
        </EtfFund>
        <EtfShare>
          <span>含上证指数</span>
          <span>100%</span>
        </EtfShare>
        <svg width="19" height="32" viewBox="0 0 19 32" fill="none" stroke="#c4c4c4" strokeWidth="3">
          <path d="M2 2l15 14L2 30" />
        </svg>
      </EtfRow>
      <NewsRow>
        <Express>
          <ExpressTop>同花顺</ExpressTop>
          速递
        </Express>
        <Headline href="#news">因端午节，A股从2026-06-19至2026-06-2...</Headline>
        <UnreadDot />
        <IconButton aria-label="关闭">
          <Stroke d="M2 2l32 32M34 2L2 34" size={26} color="#999" />
        </IconButton>
      </NewsRow>

      <Tabs>
        {tabs.map((t) => (
          <Tab key={t} $active={t === tab} onClick={() => setTab(t)}>
            {t}
          </Tab>
        ))}
        <MoreTab>
          <Select aria-label="更多周期" $size={40}>
            <option>更多</option>
          </Select>
          <Caret width={26} color="#aaa" />
        </MoreTab>
        <Settings aria-label="设置">
          <svg width="54" height="52" viewBox="0 0 54 52" fill="none" stroke="#999" strokeWidth="5" strokeLinejoin="round">
            <path d="M15 3h24l13 23-13 23H15L2 26Z" />
            <circle cx="27" cy="26" r="8" />
          </svg>
        </Settings>
      </Tabs>

      <Legend>
        <LegendPicker>
          <Picker $height={50}>
            <Select aria-label="主图指标" $size={32}>
              <option>均线</option>
            </Select>
            <Caret width={20} />
          </Picker>
        </LegendPicker>
        <LegendItems>
          <LegendTitle>日线</LegendTitle>
          <Colored $color="#111">M5:4083.69</Colored>
          <Colored $color="#e2a21c">M10:4039.58</Colored>
          <Colored $color="#e9637a">M20:4067.11</Colored>
          <Colored $color="#6cc24a">M30:4101.93</Colored>
          <Colored $color="#3478a8">M60:4053.48</Colored>
          <Colored $color="#481450">M100:4074.74</Colored>
        </LegendItems>
        <Adjust>前复权</Adjust>
        <Chips>筹码</Chips>
      </Legend>

      <PriceChart />
      <TimeAxis>
        <FirstDay>2024-04-15</FirstDay>
        <Tick $fade>10-30</Tick>
        <Tick>05-19</Tick>
        <Tick>11-28</Tick>
        <Tick $last>06-18</Tick>
      </TimeAxis>
      <VolumeChart />
      <RsiChart />

      <Footer>
        <Actions>
          <Action href="#buy-index">
            <ActionBox>买</ActionBox>买指数
          </Action>
          <Action href="#buy-futures">
            <ActionBox>期</ActionBox>买期货
          </Action>
          <Action href="#watch">
            <svg width="50" height="50" viewBox="0 0 50 50" fill="none" stroke="#d6d6d6" strokeWidth="3">
              <path d="M2 2h46v46H2zM12 25h26M25 12v26" />
            </svg>
            加自选
          </Action>
          <Action href="#more">
            <svg width="50" height="50" viewBox="0 0 50 50" fill="none" stroke="#d6d6d6" strokeWidth="3">
              <circle cx="25" cy="25" r="23" />
              <path d="M14 18h22M14 32h22" />
            </svg>
            功能
          </Action>
        </Actions>
        <HomeBar />
        <Author>
          <b>头条</b> @梦醒阿勒泰
        </Author>
      </Footer>
    </main>
  );
};

export default App;
